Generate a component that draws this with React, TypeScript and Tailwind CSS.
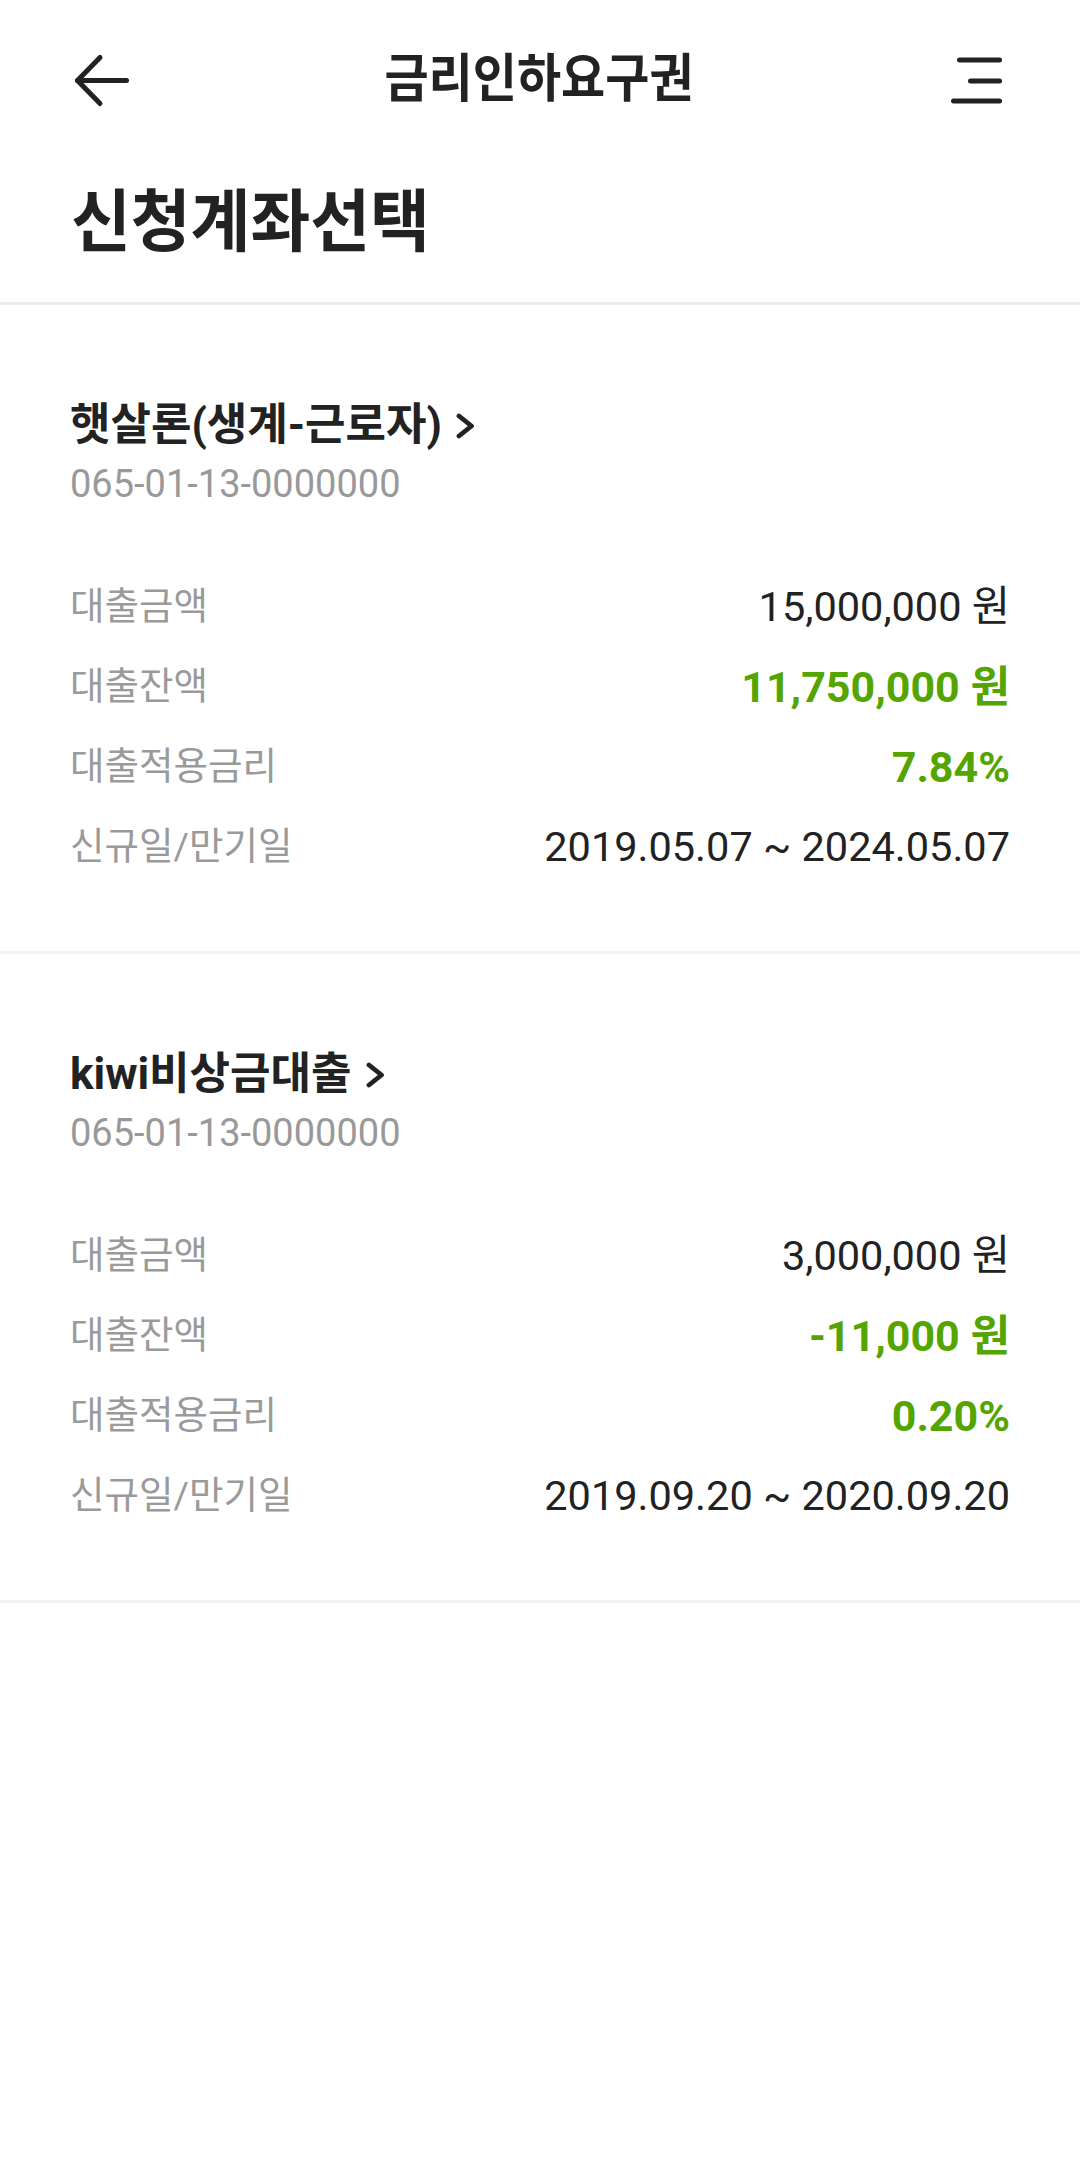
type Loan = {
  name: string;
  account: string;
  amount: string;
  balance: string;
  rate: string;
  period: string;
};

const loans: Loan[] = [
  {
    name: '햇살론(생계-근로자)',
    account: '065-01-13-0000000',
    amount: '15,000,000 원',
    balance: '11,750,000 원',
    rate: '7.84%',
    period: '2019.05.07 ~ 2024.05.07',
  },
  {
    name: 'kiwi비상금대출',
    account: '065-01-13-0000000',
    amount: '3,000,000 원',
    balance: '-11,000 원',
    rate: '0.20%',
    period: '2019.09.20 ~ 2020.09.20',
  },
];

function BackIcon() {
  return (
    <svg width="60" height="56" viewBox="0 0 60 56" fill="none" stroke="#222" strokeWidth={5} strokeLinecap="round" strokeLinejoin="round">
      <path d="M28 5.5 L5.5 28.5 L28 51.5" />
      <path d="M5.5 28.5 H54.5" />
    </svg>
  );
}

function MenuIcon() {
  return (
    <svg width="60" height="56" viewBox="0 0 60 56" fill="none" stroke="#222" strokeWidth={5} strokeLinecap="round">
      <path d="M13.5 8 H53.5" />
      <path d="M24.5 29 H53.5" />
      <path d="M7.5 49 H53.5" />
    </svg>
  );
}

function Chevron() {
  return (
    <svg className="ml-[14px] mt-[2px] shrink-0" width="20" height="26" viewBox="0 0 20 26" fill="none" stroke="#222" strokeWidth={4.8} strokeLinecap="round" strokeLinejoin="round">
      <path d="M3 3 L15.5 13 L3 23" />
    </svg>
  );
}

function Row({ label, value, accent }: { label: string; value: string; accent?: boolean }) {
  return (
    <div className="flex h-[80px] items-center justify-between">
      <span className="text-[37.5px] leading-none text-[#9a9a9a]">{label}</span>
      <span
        className={
          accent
            ? 'text-[43px] font-bold leading-none text-[#55a500]'
            : 'text-[41.5px] leading-none text-[#222]'
        }
      >
        {value}
      </span>
    </div>
  );
}

function LoanCard({ loan }: { loan: Loan }) {
  return (
    <section className="px-[70px] pt-[98px] pb-[64px]">
      <div className="flex h-[44px] items-center">
        <h2 className="text-[44px] font-bold leading-[44px] text-[#222]">{loan.name}</h2>
        <Chevron />
      </div>
      <p className="mt-[18px] text-[38px] leading-[38px] text-[#999]">{loan.account}</p>
      <div className="mt-[64px]">
        <Row label="대출금액" value={loan.amount} />
        <Row label="대출잔액" value={loan.balance} accent />
        <Row label="대출적용금리" value={loan.rate} accent />
        <Row label="신규일/만기일" value={loan.period} />
      </div>
    </section>
  );
}

export default function App() {
  return (
    <div className="min-h-[2162px] bg-white font-['Roboto','Noto_Sans_CJK_KR',sans-serif] text-[#222]">
      <header className="grid h-[160px] grid-cols-[1fr_auto_1fr] items-center pl-[72px] pr-[74px]">
        <button className="justify-self-start" aria-label="뒤로">
          <BackIcon />
        </button>
        <h1 className="block origin-center scale-y-[1.09] text-[48px] font-bold leading-[48px] text-[#222]">
          금리인하요구권
        </h1>
        <button className="justify-self-end" aria-label="메뉴">
          <MenuIcon />
        </button>
      </header>

      <div className="h-[142px] px-[71px] pt-[31px]">
        <h1 className="block origin-center scale-y-[1.05] text-[65px] font-bold leading-[65px] text-[#222]">
          신청계좌선택
        </h1>
      </div>
      <div className="h-[3px] bg-[#ebebeb]" />

      {loans.map((loan, i) => (
        <div key={i}>
          <LoanCard loan={loan} />
          <div className="h-[3px] bg-[#f3f3f3]" />
        </div>
      ))}
    </div>
  );
}
